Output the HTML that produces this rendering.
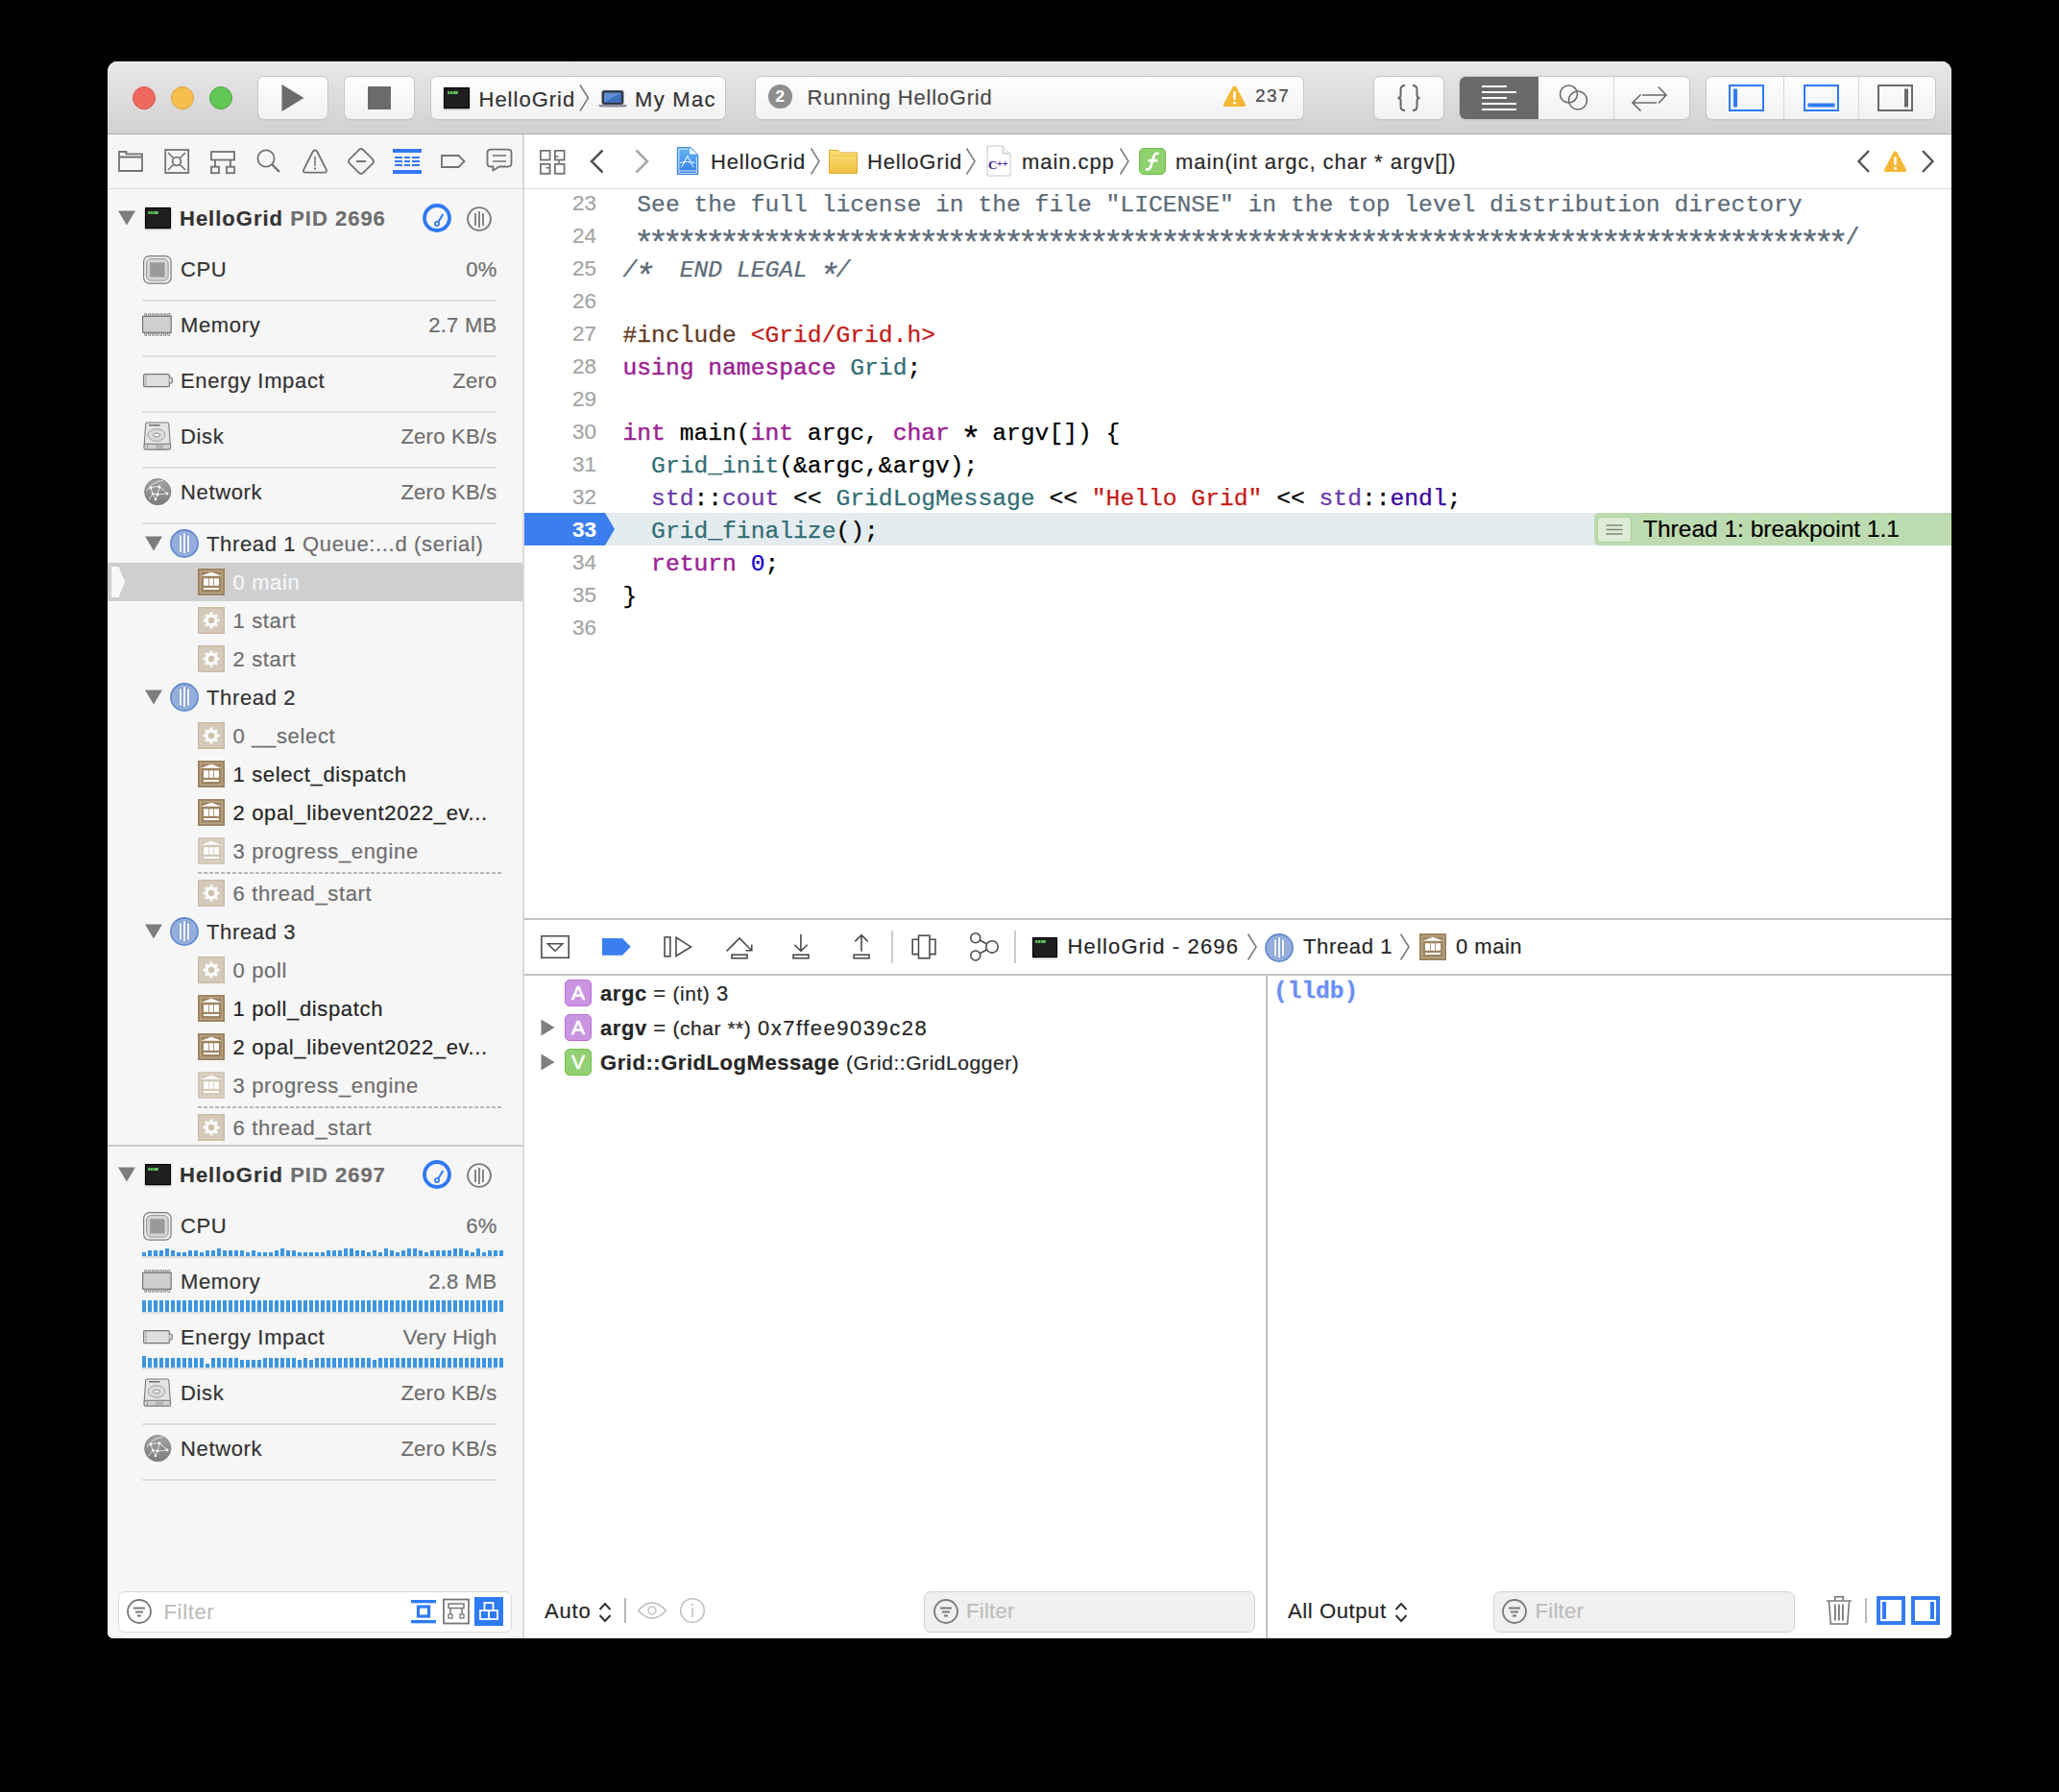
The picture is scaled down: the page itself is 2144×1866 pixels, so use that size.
<!DOCTYPE html>
<html><head><meta charset="utf-8">
<style>
*{box-sizing:border-box}
html,body{margin:0;padding:0}
body{background:#000;width:2144px;height:1866px;overflow:hidden;position:relative;font-family:"Liberation Sans",sans-serif;-webkit-text-stroke:0.2px currentColor}
.a{position:absolute}
#win{position:absolute;left:112px;top:64px;width:1920px;height:1642px;border-radius:10px 10px 6px 6px;overflow:hidden;background:#fff}
#tb{position:absolute;left:0;top:0;width:1920px;height:76px;background:linear-gradient(#e9e7e9,#d2d0d2);border-bottom:1px solid #acacac;box-shadow:inset 0 1px 0 #f3f3f3}
.light{position:absolute;top:26px;width:24px;height:24px;border-radius:50%}
.btn{position:absolute;top:15px;height:45.5px;border-radius:7px;background:linear-gradient(#fefefe,#f1f1f1);border:1px solid #c6c6c6;box-shadow:0 1px 0 rgba(0,0,0,0.04)}
#nav{position:absolute;left:0;top:76px;width:1920px;height:57px;background:#fff;border-bottom:1px solid #dcdcdc}
#navl{position:absolute;left:0;top:0;width:432px;height:56px;background:#f6f6f6}
#side{position:absolute;left:0;top:133px;width:434px;height:1509px;background:#f6f6f6;border-right:2px solid #dadada}
#ed{position:absolute;left:434px;top:133px;width:1486px;height:760px;background:#fff;overflow:hidden}
.lnum{font-family:"Liberation Sans",sans-serif;font-size:22.5px;line-height:34px;height:34px;text-align:right}
.ast{font-size:35.8px;letter-spacing:-6.68px;position:relative;top:11.4px;line-height:0;margin-left:-3.34px;margin-right:3.34px}
.mono{font-family:"Liberation Mono",monospace;font-size:24.66px;line-height:34px;height:34px;white-space:pre;-webkit-text-stroke:0.25px currentColor}
.ln{position:absolute;left:0;width:1487px;height:34px;font-family:"Liberation Mono",monospace;font-size:24.6px;line-height:34px;white-space:pre}
.num{position:absolute;left:0;width:75.5px;text-align:right;color:#a0a0a0;top:2px}
.code{position:absolute;left:103.75px;top:2px;color:#000}
#dbg{position:absolute;left:434px;top:892px;width:1486px;height:60px;background:#fff;border-top:2px solid #c2c2c2;border-bottom:2px solid #c2c2c2}
#vars{position:absolute;left:434px;top:952px;width:1486px;height:689px;background:#fff}

.tt{font-size:22px;color:#333;white-space:nowrap;line-height:28px}
.term{background:#1f1f1f;border:1px solid #000;box-shadow:0 1px 1.5px rgba(0,0,0,0.35)}
.term::after{content:"";position:absolute;left:2.5px;top:2.5px;width:11px;height:3px;border-radius:1px;background:repeating-linear-gradient(90deg,#5cbf5c 0 2.2px,#3a6a3a 2.2px 2.8px)}
.st{font-family:"Liberation Sans",sans-serif;font-size:23px;color:#262626;white-space:nowrap}
</style></head>
<body>
<div id="win">
  <div id="tb">
    <div class="light" style="left:26px;background:#ee6a5f;border:1px solid #d9534a"></div>
    <div class="light" style="left:66px;background:#f5be4f;border:1px solid #dea236"></div>
    <div class="light" style="left:106px;background:#62c655;border:1px solid #4fa93f"></div>
    <div class="btn" style="left:155.5px;width:74.5px"></div>
    <svg class="a" style="left:181px;top:24px" width="24" height="28"><path d="M0.5 0 L23.5 14 L0.5 28 Z" fill="#6b6b6b"/></svg>
    <div class="btn" style="left:245.5px;width:74.5px"></div>
    <div class="a" style="left:271px;top:26px;width:24px;height:24px;background:#6b6b6b"></div>
    <div class="btn" style="left:335.5px;width:308.5px"></div>
    <div class="a term" style="left:350px;top:27px;width:27px;height:22px"></div>
    <div class="a tt" style="left:386.5px;top:25.5px;letter-spacing:1.0px">HelloGrid</div>
    <svg class="a" style="left:491px;top:24px" width="11" height="28"><path d="M1 0.5 L9.5 14 L1 27.5" fill="none" stroke="#7a7a7a" stroke-width="1.6"/></svg>
    <svg class="a" style="left:511px;top:30px" width="30" height="18">
      <rect x="4" y="0.5" width="22" height="14" rx="1.5" fill="#2b3340" stroke="#4b4f57" stroke-width="1"/>
      <rect x="6" y="2.5" width="18" height="10" fill="#5f8fd6"/>
      <path d="M6 12.5 L24 2.5 L24 12.5 Z" fill="#3f6fc0"/>
      <path d="M0 15 L30 15 L28.5 17.5 L1.5 17.5 Z" fill="#8d9096"/>
    </svg>
    <div class="a tt" style="left:549px;top:25.5px;letter-spacing:1.3px">My Mac</div>
    <div class="btn" style="left:673.5px;width:572.5px"></div>
    <div class="a" style="left:688px;top:24px;width:24.5px;height:24.5px;border-radius:50%;background:#8e8e8e;color:#fff;font-size:17px;font-weight:bold;text-align:center;line-height:25px">2</div>
    <div class="a tt" style="left:728.5px;top:23.5px;color:#4a4a4a;letter-spacing:0.78px">Running HelloGrid</div>
    <svg class="a" style="left:1161px;top:24px" width="25" height="24"><path d="M12.5 1.5 Q13.7 1.5 14.5 2.8 L24 20.5 Q24.6 23 22 23 L3 23 Q0.4 23 1 20.5 L10.5 2.8 Q11.3 1.5 12.5 1.5Z" fill="#f5b733"/><rect x="11.2" y="7" width="2.6" height="9" rx="1.2" fill="#fff"/><circle cx="12.5" cy="19.3" r="1.5" fill="#fff"/></svg>
    <div class="a" style="left:1195px;top:25px;font-size:19px;color:#4a4a4a;letter-spacing:1.5px">237</div>
    <div class="btn" style="left:1317.5px;width:74.5px"></div>
    <svg class="a" style="left:1338px;top:22px" width="34" height="32"><path d="M13 3 Q8.5 3 8.5 7.5 L8.5 13.2 Q8.5 15.9 5.5 15.9 Q8.5 15.9 8.5 18.6 L8.5 24.5 Q8.5 29 13 29 M21 3 Q25.5 3 25.5 7.5 L25.5 13.2 Q25.5 15.9 28.5 15.9 Q25.5 15.9 25.5 18.6 L25.5 24.5 Q25.5 29 21 29" fill="none" stroke="#666" stroke-width="2"/></svg>
    <div class="btn" style="left:1407px;width:241px;overflow:hidden">
      <div class="a" style="left:-1px;top:-1px;width:83px;height:45px;background:#6a6a6a"></div>
      <div class="a" style="left:160px;top:0;width:1px;height:45px;background:#d6d6d6"></div>
    </div>
    <svg class="a" style="left:1431px;top:25px" width="37" height="27"><g fill="#fff"><rect x="0" y="0" width="26" height="2"/><rect x="0" y="6" width="36" height="2"/><rect x="0" y="12" width="26" height="2"/><rect x="0" y="18" width="36" height="2"/><rect x="0" y="24" width="36" height="2"/></g></svg>
    <svg class="a" style="left:1511px;top:23px" width="34" height="30"><circle cx="10.5" cy="11" r="9" fill="none" stroke="#6b6b6b" stroke-width="1.6"/><circle cx="20" cy="17.5" r="9.5" fill="none" stroke="#6b6b6b" stroke-width="1.6"/></svg>
    <svg class="a" style="left:1587px;top:24px" width="38" height="28"><g fill="none" stroke="#6b6b6b" stroke-width="1.6"><path d="M11 11 L36 11 M28 2.5 L36 11 L28 19.5"/><path d="M1 19 L26 19 M9.5 10.5 L1 19 L9.5 27.5"/></g></svg>
    <div class="btn" style="left:1664px;width:240px;overflow:hidden">
      <div class="a" style="left:80px;top:0;width:1px;height:45px;background:#d6d6d6"></div>
      <div class="a" style="left:158px;top:0;width:1px;height:45px;background:#d6d6d6"></div>
    </div>
    <svg class="a" style="left:1688px;top:24px" width="37" height="28"><rect x="1" y="1" width="35" height="26" fill="none" stroke="#2f7bf5" stroke-width="2"/><rect x="5" y="4.5" width="4" height="19" fill="#2f7bf5"/></svg>
    <svg class="a" style="left:1766px;top:24px" width="37" height="28"><rect x="1" y="1" width="35" height="26" fill="none" stroke="#2f7bf5" stroke-width="2"/><rect x="4.5" y="19.5" width="28" height="4" fill="#2f7bf5"/></svg>
    <svg class="a" style="left:1843px;top:24px" width="37" height="28"><rect x="1" y="1" width="35" height="26" fill="none" stroke="#6b6b6b" stroke-width="2"/><rect x="28" y="4.5" width="4" height="19" fill="#6b6b6b"/></svg>
  </div>
  <div id="nav"><div id="navl"></div>
    <svg class="a" style="left:0;top:0" width="432" height="56"><g fill="none" stroke="#737373" stroke-width="1.8">
      <path d="M12 18 L19.5 18 L19.5 20.30000000000001 L36 20.30000000000001 L36 38 L12 38 Z M12 23.5 L36 23.5"/>
      <rect x="60.19999999999999" y="16" width="24" height="24"/>
      <circle cx="72" cy="28" r="4.3"/>
      <path d="M63 19 L68.5 24.5 M81 19 L75.5 24.5 M63 37 L68.5 31.5 M81 37 L75.5 31.5" stroke-width="1.6"/>
      <rect x="108" y="18" width="24" height="8.5"/>
      <rect x="108" y="33.69999999999999" width="8" height="6.5"/>
      <rect x="124" y="33.69999999999999" width="8" height="6.5"/>
      <path d="M112 26.5 L112 33.69999999999999 M128 26.5 L128 33.69999999999999"/>
      <circle cx="165" cy="25" r="8.6"/>
      <path d="M171 31 L179 39" stroke-width="2.4"/>
      <path d="M216 16.5 Q217.5 16.5 218.3 18 L228 37 Q228.60000000000002 39.69999999999999 225.8 39.69999999999999 L206.2 39.69999999999999 Q203.39999999999998 39.69999999999999 204 37 L213.7 18 Q214.5 16.5 216 16.5 Z"/>
      <path d="M216 23 L216 33" stroke-width="1.5"/>
      <rect x="254" y="18" width="20" height="20" rx="3.2" transform="rotate(45 264 28)"/>
      <path d="M259 28 L269 28"/>
      <path d="M348 22 L365.5 22 L371.5 28 L365.5 34 L348 34 Z"/>
      <path d="M399 15.699999999999989 L417 15.699999999999989 Q420.5 15.699999999999989 420.5 19 L420.5 30 Q420.5 33.5 417 33.5 L408 33.5 L401.5 37.5 L401.5 33.5 L399 33.5 Q395.5 33.5 395.5 30 L395.5 19 Q395.5 15.699999999999989 399 15.699999999999989 Z"/>
      <path d="M401 22 L415 22 M401 28 L415 28" stroke-width="1.6"/>
    </g>
    <rect x="215" y="34.5" width="2" height="2" fill="#737373"/>
    <g fill="#3478f6">
      <rect x="297" y="15" width="30" height="4"/>
      <rect x="297" y="37" width="30" height="4"/>
      <rect x="299" y="23" width="8" height="2"/><rect x="309" y="23" width="6" height="2"/><rect x="317" y="23" width="8" height="2"/>
      <rect x="299" y="27" width="8" height="2"/><rect x="309" y="27" width="6" height="2"/><rect x="317" y="27" width="8" height="2"/>
      <rect x="299" y="31" width="8" height="2"/><rect x="309" y="31" width="6" height="2"/><rect x="317" y="31" width="8" height="2"/>
    </g></svg>
    <div class="a" style="left:432px;top:0;width:1.5px;height:56px;background:#d8d8d8"></div>
    <svg class="a" style="left:448px;top:14px" width="30" height="30"><g fill="none" stroke="#737373" stroke-width="1.8">
      <rect x="2.9" y="2.9" width="9.7" height="9.6"/><rect x="17.9" y="2.9" width="9.7" height="9.6"/><rect x="2.9" y="16.9" width="9.7" height="9.9"/><rect x="17.9" y="16.9" width="9.7" height="9.9"/><path d="M17.9 9 L21.5 9 M22 12.5 L22 16.9 M12.6 20.7 L8.5 20.7" stroke-width="1.6"/></g></svg>
    <svg class="a" style="left:501px;top:14px" width="18" height="28"><path d="M14.5 2.5 L3 14 L14.5 25.5" fill="none" stroke="#555" stroke-width="2.5"/></svg>
    <svg class="a" style="left:547px;top:14px" width="18" height="28"><path d="M3.5 2.5 L15 14 L3.5 25.5" fill="none" stroke="#a8a8a8" stroke-width="2.5"/></svg>
    <svg class="a" style="left:592px;top:12px" width="25" height="31">
      <defs><linearGradient id="gapp" x1="0" y1="0" x2="0" y2="1"><stop offset="0" stop-color="#6ab6f0"/><stop offset="1" stop-color="#2f7cef"/></linearGradient></defs>
      <path d="M1.3 1.5 L13.8 1.5 Q15 1.5 16 2.4 L21.8 8 Q22.8 9 22.8 10.5 L22.8 29.6 L1.3 29.6 Z" fill="url(#gapp)" stroke="#3a86d8" stroke-width="1"/>
      <path d="M14.2 2 L14.2 8.6 L22.3 8.6 Z" fill="#f4f8fc"/>
      <path d="M2.9 28.3 L2.9 3.1 L12.7 3.1 M21.4 11.2 L21.4 28.3 L2.9 28.3 M2.9 25.9 L21.4 25.9" stroke="#e2efff" stroke-width="0.9" fill="none"/>
      <path d="M11.9 10.6 L5.5 22.4 M11.9 10.6 L18.4 22.4 M4.3 17.6 Q12 15.6 19.6 17.6" stroke="#f0f6ff" stroke-width="1.3" fill="none" stroke-dasharray="2 0.6"/>
    </svg>
    <div class="a tt" style="left:628px;top:14.5px;color:#2a2a2a;letter-spacing:0.83px">HelloGrid</div>
    <svg class="a" style="left:731px;top:14px" width="12" height="28"><path d="M1.5 0.5 L10 14 L1.5 27.5" fill="none" stroke="#808080" stroke-width="1.6"/></svg>
    <svg class="a" style="left:750px;top:15px" width="32" height="27">
      <defs><linearGradient id="gfold" x1="0" y1="0" x2="0" y2="1"><stop offset="0" stop-color="#fbe07a"/><stop offset="1" stop-color="#f0c040"/></linearGradient></defs>
      <path d="M1.5 1.5 L11 1.5 L12.5 4 L30.5 4 L30.5 25.5 L1.5 25.5 Z" fill="url(#gfold)" stroke="#dcae36" stroke-width="1"/>
      <path d="M1.5 7 L30.5 7" stroke="#e9c24c" stroke-width="1"/>
    </svg>
    <div class="a tt" style="left:791px;top:14.5px;color:#2a2a2a;letter-spacing:0.83px">HelloGrid</div>
    <svg class="a" style="left:893px;top:14px" width="12" height="28"><path d="M1.5 0.5 L10 14 L1.5 27.5" fill="none" stroke="#808080" stroke-width="1.6"/></svg>
    <svg class="a" style="left:915px;top:11px" width="26" height="33">
      <path d="M1 1 L17 1 L25 9 L25 32 L1 32 Z" fill="#fff" stroke="#c8c8c8" stroke-width="1"/>
      <path d="M17 1 L17 9 L25 9" fill="#eee" stroke="#c8c8c8" stroke-width="1"/>
      <text x="2" y="25" font-family="Liberation Serif" font-size="13" fill="#3d1d92" font-weight="bold">C</text>
      <text x="11" y="23" font-family="Liberation Sans" font-size="10" fill="#3d1d92">++</text>
    </svg>
    <div class="a tt" style="left:952px;top:14.5px;color:#2a2a2a;letter-spacing:0.93px">main.cpp</div>
    <svg class="a" style="left:1053px;top:14px" width="12" height="28"><path d="M1.5 0.5 L10 14 L1.5 27.5" fill="none" stroke="#808080" stroke-width="1.6"/></svg>
    <div class="a" style="left:1074px;top:14px;width:28px;height:28px;border-radius:5px;background:#8fd16f;border:1.5px solid #6cbd4c"></div>
    <svg class="a" style="left:1074px;top:14px" width="28" height="28"><path d="M20.5 6.2 Q17 4.5 15.5 8.5 L12.2 19.5 Q10.8 23.5 7 22 M9.5 13.2 L19.5 13.2" fill="none" stroke="#fff" stroke-width="2.7"/></svg>
    <div class="a tt" style="left:1112px;top:14.5px;color:#2a2a2a;letter-spacing:0.94px">main(int argc, char * argv[])</div>
    <svg class="a" style="left:1820px;top:15px" width="17" height="26"><path d="M14 2 L3.5 13 L14 24" fill="none" stroke="#555" stroke-width="2.4"/></svg>
    <svg class="a" style="left:1849px;top:16px" width="25" height="24"><path d="M12.5 1.5 Q13.7 1.5 14.5 2.8 L24 20.5 Q24.6 23 22 23 L3 23 Q0.4 23 1 20.5 L10.5 2.8 Q11.3 1.5 12.5 1.5Z" fill="#f5b733"/><rect x="11.2" y="7" width="2.6" height="9" rx="1.2" fill="#fff"/><circle cx="12.5" cy="19.3" r="1.5" fill="#fff"/></svg>
    <svg class="a" style="left:1887px;top:15px" width="17" height="26"><path d="M3 2 L13.5 13 L3 24" fill="none" stroke="#555" stroke-width="2.4"/></svg>
  </div>
  <div id="side"><svg class="a" style="left:11px;top:22px" width="18" height="16"><path d="M0 0.5 L18 0.5 L9 15.5 Z" fill="#7d7d7d"/></svg>
<div class="a term" style="left:38.5px;top:19px;width:27px;height:22px"></div>
<div class="a" style="left:75px;top:15.8px;height:30px;line-height:30px;font-size:22px;font-weight:bold;color:#333333;white-space:nowrap;letter-spacing:0.65px;letter-spacing:1.0px">HelloGrid <span style="color:#6e6e6e">PID 2696</span></div>
<svg class="a" style="left:327px;top:14px" width="32" height="32"><circle cx="16" cy="16" r="13" fill="none" stroke="#3079f4" stroke-width="3.8"/><circle cx="16" cy="22" r="2.1" fill="none" stroke="#3079f4" stroke-width="1.7"/><path d="M17.3 20.3 L22.3 12" stroke="#3079f4" stroke-width="2" fill="none"/></svg>
<svg class="a" style="left:373px;top:17px" width="28" height="28"><circle cx="14" cy="14" r="11.9" fill="none" stroke="#7a7a7a" stroke-width="1.9"/><path d="M10 8 L10 21 M14 6 L14 23 M18 8 L18 21" stroke="#7a7a7a" stroke-width="1.8"/></svg>
<svg class="a" style="left:37px;top:68.5px" width="30" height="30"><rect x="0.6" y="0.6" width="28.5" height="28.5" rx="6" fill="#efefef" stroke="#7a7a7a" stroke-width="1.2"/><rect x="3.6" y="3.6" width="22.5" height="22.5" rx="4.5" fill="#d6d6d6" stroke="#929292" stroke-width="1"/><rect x="7.5" y="7.5" width="14.7" height="14.7" fill="#9c9c9c" stroke="#9c9c9c" stroke-width="1.2" stroke-dasharray="1.2 1"/><rect x="8.8" y="8.8" width="12.1" height="12.1" fill="#9a9a9a"/></svg>
<div class="a" style="left:76px;top:68.8px;height:30px;line-height:30px;font-size:22px;font-weight:normal;color:#333333;white-space:nowrap;letter-spacing:0.65px;">CPU</div>
<div class="a" style="right:26.799999999999955px;top:68.8px;height:30px;line-height:30px;font-size:22px;color:#6e6e6e;white-space:nowrap;text-align:right;letter-spacing:0.25px;margin-right:-0.25px">0%</div>
<div class="a" style="left:36px;top:115px;width:368px;height:2px;background:#dedede"></div>
<svg class="a" style="left:36px;top:129px" width="31" height="24"><rect x="2.6" y="0.3" width="2.2" height="3.4" rx="0.8" fill="#ddd" stroke="#7a7a7a" stroke-width="0.9"/><rect x="2.6" y="20.2" width="2.2" height="3.4" rx="0.8" fill="#ddd" stroke="#7a7a7a" stroke-width="0.9"/><rect x="6.6" y="0.3" width="2.2" height="3.4" rx="0.8" fill="#ddd" stroke="#7a7a7a" stroke-width="0.9"/><rect x="6.6" y="20.2" width="2.2" height="3.4" rx="0.8" fill="#ddd" stroke="#7a7a7a" stroke-width="0.9"/><rect x="10.6" y="0.3" width="2.2" height="3.4" rx="0.8" fill="#ddd" stroke="#7a7a7a" stroke-width="0.9"/><rect x="10.6" y="20.2" width="2.2" height="3.4" rx="0.8" fill="#ddd" stroke="#7a7a7a" stroke-width="0.9"/><rect x="14.6" y="0.3" width="2.2" height="3.4" rx="0.8" fill="#ddd" stroke="#7a7a7a" stroke-width="0.9"/><rect x="14.6" y="20.2" width="2.2" height="3.4" rx="0.8" fill="#ddd" stroke="#7a7a7a" stroke-width="0.9"/><rect x="18.6" y="0.3" width="2.2" height="3.4" rx="0.8" fill="#ddd" stroke="#7a7a7a" stroke-width="0.9"/><rect x="18.6" y="20.2" width="2.2" height="3.4" rx="0.8" fill="#ddd" stroke="#7a7a7a" stroke-width="0.9"/><rect x="22.6" y="0.3" width="2.2" height="3.4" rx="0.8" fill="#ddd" stroke="#7a7a7a" stroke-width="0.9"/><rect x="22.6" y="20.2" width="2.2" height="3.4" rx="0.8" fill="#ddd" stroke="#7a7a7a" stroke-width="0.9"/><rect x="26.6" y="0.3" width="2.2" height="3.4" rx="0.8" fill="#ddd" stroke="#7a7a7a" stroke-width="0.9"/><rect x="26.6" y="20.2" width="2.2" height="3.4" rx="0.8" fill="#ddd" stroke="#7a7a7a" stroke-width="0.9"/><rect x="0.6" y="3.3" width="29.6" height="17" fill="#cfcfcf" stroke="#777" stroke-width="1.2"/></svg>
<div class="a" style="left:76px;top:126.8px;height:30px;line-height:30px;font-size:22px;font-weight:normal;color:#333333;white-space:nowrap;letter-spacing:0.65px;">Memory</div>
<div class="a" style="right:26.799999999999955px;top:126.8px;height:30px;line-height:30px;font-size:22px;color:#6e6e6e;white-space:nowrap;text-align:right;letter-spacing:0.25px;margin-right:-0.25px">2.7 MB</div>
<div class="a" style="left:36px;top:173px;width:368px;height:2px;background:#dedede"></div>
<svg class="a" style="left:37px;top:191.5px" width="31" height="16"><rect x="0.6" y="0.6" width="26.8" height="13" rx="1.3" fill="#dedede" stroke="#777" stroke-width="1.2"/><path d="M27.4 4.3 L29.2 4.3 Q30.3 4.3 30.3 5.7 L30.3 8.5 Q30.3 9.9 29.2 9.9 L27.4 9.9" fill="#dedede" stroke="#777" stroke-width="1.1"/><path d="M3 1.4 L3 12.8" stroke="#999" stroke-width="0.8"/></svg>
<div class="a" style="left:76px;top:184.8px;height:30px;line-height:30px;font-size:22px;font-weight:normal;color:#333333;white-space:nowrap;letter-spacing:0.65px;">Energy Impact</div>
<div class="a" style="right:26.799999999999955px;top:184.8px;height:30px;line-height:30px;font-size:22px;color:#6e6e6e;white-space:nowrap;text-align:right;letter-spacing:0.25px;margin-right:-0.25px">Zero</div>
<div class="a" style="left:36px;top:231px;width:368px;height:2px;background:#dedede"></div>
<svg class="a" style="left:37px;top:242px" width="30" height="31"><path d="M3.5 1 L25 1 Q26.5 1 26.8 2.5 L28.3 24 L1.2 24 L2.7 2.5 Q3 1 3.5 1 Z" fill="#e4e4e4" stroke="#7a7a7a" stroke-width="1.1"/><rect x="1" y="23.3" width="27.6" height="5.8" rx="1.5" fill="#d0d0d0" stroke="#7a7a7a" stroke-width="1.1"/><rect x="6" y="3" width="11.5" height="1.6" fill="#777"/><ellipse cx="14" cy="14" rx="9" ry="6.3" fill="#dadada" stroke="#999" stroke-width="0.9"/><ellipse cx="14" cy="14" rx="3.5" ry="2" fill="#eee" stroke="#888" stroke-width="0.9"/><path d="M4.5 24.3 L4.5 28.3 M14 24.3 L14 28.3 M16 24.3 L16 28.3 M18 24.3 L18 28.3 M20 24.3 L20 28.3" stroke="#888" stroke-width="0.8"/></svg>
<div class="a" style="left:76px;top:242.8px;height:30px;line-height:30px;font-size:22px;font-weight:normal;color:#333333;white-space:nowrap;letter-spacing:0.65px;">Disk</div>
<div class="a" style="right:26.799999999999955px;top:242.8px;height:30px;line-height:30px;font-size:22px;color:#6e6e6e;white-space:nowrap;text-align:right;letter-spacing:0.25px;margin-right:-0.25px">Zero KB/s</div>
<div class="a" style="left:36px;top:289px;width:368px;height:2px;background:#dedede"></div>
<svg class="a" style="left:38px;top:301px" width="29" height="29"><defs><linearGradient id="gnet" x1="0" y1="0" x2="0" y2="1"><stop offset="0" stop-color="#a5a5a5"/><stop offset="1" stop-color="#7b7b7b"/></linearGradient></defs><circle cx="14.2" cy="14.2" r="13.6" fill="url(#gnet)" stroke="#777" stroke-width="0.8"/><g stroke="#f2f2f2" stroke-width="0.8" fill="none"><path d="M7 10 Q12 8 16 9 Q21 12 24 16 M9 16 L14 17 L24 16 M7 10 L9 16 L12 22 M16 9 L14 17 L12 22 M3 13 Q8 4 20 2 M5 22 Q9 14 14 17"/></g><g fill="#fff"><circle cx="7" cy="10" r="1.4"/><circle cx="16" cy="9" r="1.4"/><circle cx="9" cy="16" r="1.2"/><circle cx="14" cy="17" r="1.4"/><circle cx="24" cy="16" r="1.4"/><circle cx="12" cy="22" r="1.2"/></g></svg>
<div class="a" style="left:76px;top:300.8px;height:30px;line-height:30px;font-size:22px;font-weight:normal;color:#333333;white-space:nowrap;letter-spacing:0.65px;">Network</div>
<div class="a" style="right:26.799999999999955px;top:300.8px;height:30px;line-height:30px;font-size:22px;color:#6e6e6e;white-space:nowrap;text-align:right;letter-spacing:0.25px;margin-right:-0.25px">Zero KB/s</div>
<div class="a" style="left:36px;top:347px;width:368px;height:2px;background:#dedede"></div>
<div class="a" style="left:0px;top:389px;width:432px;height:40px;background:#cfcfcf"></div>
<svg class="a" style="left:3px;top:393px" width="16" height="33"><path d="M1 0 L8.5 0 L15 16 L8.5 32 L1 32 Z" fill="#f8f8f8"/></svg>
<svg class="a" style="left:39px;top:361px" width="18" height="16"><path d="M0 0.5 L18 0.5 L9 15.5 Z" fill="#7d7d7d"/></svg>
<svg class="a" style="left:64px;top:353px" width="32" height="32"><circle cx="16" cy="16" r="14.1" fill="#95aedb" stroke="#5d87cb" stroke-width="1.6"/><g fill="#fff" stroke="#6b8fcf" stroke-width="0.6"><rect x="10.8" y="7" width="2.4" height="18"/><rect x="14.8" y="4.8" width="2.4" height="22"/><rect x="18.8" y="7" width="2.4" height="18"/></g></svg>
<div class="a" style="left:103px;top:354.8px;height:30px;line-height:30px;font-size:22px;font-weight:normal;color:#333333;white-space:nowrap;letter-spacing:0.65px;">Thread 1 <span style="color:#6e6e6e">Queue:...d (serial)</span></div>
<svg class="a" style="left:94px;top:395px" width="28" height="28"><rect x="0" y="0" width="28" height="28" fill="#9e8461"/><rect x="2" y="2" width="24" height="24" fill="#b9a586"/><rect x="3.5" y="3.5" width="21" height="21" fill="#9e8461"/><path d="M3.2 7.8 L14 3.8 L24.8 7.8 Z" fill="#fff"/><rect x="6" y="10.3" width="5" height="7.5" fill="#fff"/><rect x="11.8" y="10.3" width="4.4" height="7.5" fill="#fff"/><rect x="17" y="10.3" width="5" height="7.5" fill="#fff"/><rect x="6" y="20" width="16" height="2" fill="#fff"/></svg>
<div class="a" style="left:130.5px;top:394.8px;height:30px;line-height:30px;font-size:22px;font-weight:normal;color:#f4f8fc;white-space:nowrap;letter-spacing:0.65px;">0 main</div>
<svg class="a" style="left:94px;top:435px" width="28" height="28"><rect x="0" y="0" width="28" height="28" fill="#c9bba6"/><rect x="1.5" y="1.5" width="25" height="25" fill="#d5cab9"/><polygon points="12.55,5.52 15.45,5.52 15.46,7.56 17.52,8.42 18.96,6.98 21.02,9.04 19.58,10.48 20.44,12.54 22.48,12.55 22.48,15.45 20.44,15.46 19.58,17.52 21.02,18.96 18.96,21.02 17.52,19.58 15.46,20.44 15.45,22.48 12.55,22.48 12.54,20.44 10.48,19.58 9.04,21.02 6.98,18.96 8.42,17.52 7.56,15.46 5.52,15.45 5.52,12.55 7.56,12.54 8.42,10.48 6.98,9.04 9.04,6.98 10.48,8.42 12.54,7.56" fill="#fafafa"/><circle cx="14" cy="14" r="3.2" fill="#cdbfab"/></svg>
<div class="a" style="left:130.5px;top:434.8px;height:30px;line-height:30px;font-size:22px;font-weight:normal;color:#6e6e6e;white-space:nowrap;letter-spacing:0.65px;">1 start</div>
<svg class="a" style="left:94px;top:475px" width="28" height="28"><rect x="0" y="0" width="28" height="28" fill="#c9bba6"/><rect x="1.5" y="1.5" width="25" height="25" fill="#d5cab9"/><polygon points="12.55,5.52 15.45,5.52 15.46,7.56 17.52,8.42 18.96,6.98 21.02,9.04 19.58,10.48 20.44,12.54 22.48,12.55 22.48,15.45 20.44,15.46 19.58,17.52 21.02,18.96 18.96,21.02 17.52,19.58 15.46,20.44 15.45,22.48 12.55,22.48 12.54,20.44 10.48,19.58 9.04,21.02 6.98,18.96 8.42,17.52 7.56,15.46 5.52,15.45 5.52,12.55 7.56,12.54 8.42,10.48 6.98,9.04 9.04,6.98 10.48,8.42 12.54,7.56" fill="#fafafa"/><circle cx="14" cy="14" r="3.2" fill="#cdbfab"/></svg>
<div class="a" style="left:130.5px;top:474.8px;height:30px;line-height:30px;font-size:22px;font-weight:normal;color:#6e6e6e;white-space:nowrap;letter-spacing:0.65px;">2 start</div>
<svg class="a" style="left:39px;top:521px" width="18" height="16"><path d="M0 0.5 L18 0.5 L9 15.5 Z" fill="#7d7d7d"/></svg>
<svg class="a" style="left:64px;top:513px" width="32" height="32"><circle cx="16" cy="16" r="14.1" fill="#95aedb" stroke="#5d87cb" stroke-width="1.6"/><g fill="#fff" stroke="#6b8fcf" stroke-width="0.6"><rect x="10.8" y="7" width="2.4" height="18"/><rect x="14.8" y="4.8" width="2.4" height="22"/><rect x="18.8" y="7" width="2.4" height="18"/></g></svg>
<div class="a" style="left:103px;top:514.8px;height:30px;line-height:30px;font-size:22px;font-weight:normal;color:#333333;white-space:nowrap;letter-spacing:0.65px;">Thread 2</div>
<svg class="a" style="left:94px;top:555px" width="28" height="28"><rect x="0" y="0" width="28" height="28" fill="#c9bba6"/><rect x="1.5" y="1.5" width="25" height="25" fill="#d5cab9"/><polygon points="12.55,5.52 15.45,5.52 15.46,7.56 17.52,8.42 18.96,6.98 21.02,9.04 19.58,10.48 20.44,12.54 22.48,12.55 22.48,15.45 20.44,15.46 19.58,17.52 21.02,18.96 18.96,21.02 17.52,19.58 15.46,20.44 15.45,22.48 12.55,22.48 12.54,20.44 10.48,19.58 9.04,21.02 6.98,18.96 8.42,17.52 7.56,15.46 5.52,15.45 5.52,12.55 7.56,12.54 8.42,10.48 6.98,9.04 9.04,6.98 10.48,8.42 12.54,7.56" fill="#fafafa"/><circle cx="14" cy="14" r="3.2" fill="#cdbfab"/></svg>
<div class="a" style="left:130.5px;top:554.8px;height:30px;line-height:30px;font-size:22px;font-weight:normal;color:#6e6e6e;white-space:nowrap;letter-spacing:0.65px;">0 __select</div>
<svg class="a" style="left:94px;top:595px" width="28" height="28"><rect x="0" y="0" width="28" height="28" fill="#9e8461"/><rect x="2" y="2" width="24" height="24" fill="#b9a586"/><rect x="3.5" y="3.5" width="21" height="21" fill="#9e8461"/><path d="M3.2 7.8 L14 3.8 L24.8 7.8 Z" fill="#fff"/><rect x="6" y="10.3" width="5" height="7.5" fill="#fff"/><rect x="11.8" y="10.3" width="4.4" height="7.5" fill="#fff"/><rect x="17" y="10.3" width="5" height="7.5" fill="#fff"/><rect x="6" y="20" width="16" height="2" fill="#fff"/></svg>
<div class="a" style="left:130.5px;top:594.8px;height:30px;line-height:30px;font-size:22px;font-weight:normal;color:#262626;white-space:nowrap;letter-spacing:0.65px;">1 select_dispatch</div>
<svg class="a" style="left:94px;top:635px" width="28" height="28"><rect x="0" y="0" width="28" height="28" fill="#9e8461"/><rect x="2" y="2" width="24" height="24" fill="#b9a586"/><rect x="3.5" y="3.5" width="21" height="21" fill="#9e8461"/><path d="M3.2 7.8 L14 3.8 L24.8 7.8 Z" fill="#fff"/><rect x="6" y="10.3" width="5" height="7.5" fill="#fff"/><rect x="11.8" y="10.3" width="4.4" height="7.5" fill="#fff"/><rect x="17" y="10.3" width="5" height="7.5" fill="#fff"/><rect x="6" y="20" width="16" height="2" fill="#fff"/></svg>
<div class="a" style="left:130.5px;top:634.8px;height:30px;line-height:30px;font-size:22px;font-weight:normal;color:#262626;white-space:nowrap;letter-spacing:0.65px;">2 opal_libevent2022_ev...</div>
<svg class="a" style="left:94px;top:675px" width="28" height="28"><rect x="0" y="0" width="28" height="28" fill="#d3c8b7"/><rect x="2" y="2" width="24" height="24" fill="#ddd3c5"/><rect x="3.5" y="3.5" width="21" height="21" fill="#d3c8b7"/><path d="M3.2 7.8 L14 3.8 L24.8 7.8 Z" fill="#fff"/><rect x="6" y="10.3" width="5" height="7.5" fill="#fff"/><rect x="11.8" y="10.3" width="4.4" height="7.5" fill="#fff"/><rect x="17" y="10.3" width="5" height="7.5" fill="#fff"/><rect x="6" y="20" width="16" height="2" fill="#fff"/></svg>
<div class="a" style="left:130.5px;top:674.8px;height:30px;line-height:30px;font-size:22px;font-weight:normal;color:#6e6e6e;white-space:nowrap;letter-spacing:0.65px;">3 progress_engine</div>
<div class="a" style="left:94px;top:711px;width:316px;height:2px;background:repeating-linear-gradient(90deg,#b8b8b8 0 4px,transparent 4px 6px)"></div>
<svg class="a" style="left:94px;top:719px" width="28" height="28"><rect x="0" y="0" width="28" height="28" fill="#c9bba6"/><rect x="1.5" y="1.5" width="25" height="25" fill="#d5cab9"/><polygon points="12.55,5.52 15.45,5.52 15.46,7.56 17.52,8.42 18.96,6.98 21.02,9.04 19.58,10.48 20.44,12.54 22.48,12.55 22.48,15.45 20.44,15.46 19.58,17.52 21.02,18.96 18.96,21.02 17.52,19.58 15.46,20.44 15.45,22.48 12.55,22.48 12.54,20.44 10.48,19.58 9.04,21.02 6.98,18.96 8.42,17.52 7.56,15.46 5.52,15.45 5.52,12.55 7.56,12.54 8.42,10.48 6.98,9.04 9.04,6.98 10.48,8.42 12.54,7.56" fill="#fafafa"/><circle cx="14" cy="14" r="3.2" fill="#cdbfab"/></svg>
<div class="a" style="left:130.5px;top:718.8px;height:30px;line-height:30px;font-size:22px;font-weight:normal;color:#6e6e6e;white-space:nowrap;letter-spacing:0.65px;">6 thread_start</div>
<svg class="a" style="left:39px;top:765px" width="18" height="16"><path d="M0 0.5 L18 0.5 L9 15.5 Z" fill="#7d7d7d"/></svg>
<svg class="a" style="left:64px;top:757px" width="32" height="32"><circle cx="16" cy="16" r="14.1" fill="#95aedb" stroke="#5d87cb" stroke-width="1.6"/><g fill="#fff" stroke="#6b8fcf" stroke-width="0.6"><rect x="10.8" y="7" width="2.4" height="18"/><rect x="14.8" y="4.8" width="2.4" height="22"/><rect x="18.8" y="7" width="2.4" height="18"/></g></svg>
<div class="a" style="left:103px;top:758.8px;height:30px;line-height:30px;font-size:22px;font-weight:normal;color:#333333;white-space:nowrap;letter-spacing:0.65px;">Thread 3</div>
<svg class="a" style="left:94px;top:799px" width="28" height="28"><rect x="0" y="0" width="28" height="28" fill="#c9bba6"/><rect x="1.5" y="1.5" width="25" height="25" fill="#d5cab9"/><polygon points="12.55,5.52 15.45,5.52 15.46,7.56 17.52,8.42 18.96,6.98 21.02,9.04 19.58,10.48 20.44,12.54 22.48,12.55 22.48,15.45 20.44,15.46 19.58,17.52 21.02,18.96 18.96,21.02 17.52,19.58 15.46,20.44 15.45,22.48 12.55,22.48 12.54,20.44 10.48,19.58 9.04,21.02 6.98,18.96 8.42,17.52 7.56,15.46 5.52,15.45 5.52,12.55 7.56,12.54 8.42,10.48 6.98,9.04 9.04,6.98 10.48,8.42 12.54,7.56" fill="#fafafa"/><circle cx="14" cy="14" r="3.2" fill="#cdbfab"/></svg>
<div class="a" style="left:130.5px;top:798.8px;height:30px;line-height:30px;font-size:22px;font-weight:normal;color:#6e6e6e;white-space:nowrap;letter-spacing:0.65px;">0 poll</div>
<svg class="a" style="left:94px;top:839px" width="28" height="28"><rect x="0" y="0" width="28" height="28" fill="#9e8461"/><rect x="2" y="2" width="24" height="24" fill="#b9a586"/><rect x="3.5" y="3.5" width="21" height="21" fill="#9e8461"/><path d="M3.2 7.8 L14 3.8 L24.8 7.8 Z" fill="#fff"/><rect x="6" y="10.3" width="5" height="7.5" fill="#fff"/><rect x="11.8" y="10.3" width="4.4" height="7.5" fill="#fff"/><rect x="17" y="10.3" width="5" height="7.5" fill="#fff"/><rect x="6" y="20" width="16" height="2" fill="#fff"/></svg>
<div class="a" style="left:130.5px;top:838.8px;height:30px;line-height:30px;font-size:22px;font-weight:normal;color:#262626;white-space:nowrap;letter-spacing:0.65px;">1 poll_dispatch</div>
<svg class="a" style="left:94px;top:879px" width="28" height="28"><rect x="0" y="0" width="28" height="28" fill="#9e8461"/><rect x="2" y="2" width="24" height="24" fill="#b9a586"/><rect x="3.5" y="3.5" width="21" height="21" fill="#9e8461"/><path d="M3.2 7.8 L14 3.8 L24.8 7.8 Z" fill="#fff"/><rect x="6" y="10.3" width="5" height="7.5" fill="#fff"/><rect x="11.8" y="10.3" width="4.4" height="7.5" fill="#fff"/><rect x="17" y="10.3" width="5" height="7.5" fill="#fff"/><rect x="6" y="20" width="16" height="2" fill="#fff"/></svg>
<div class="a" style="left:130.5px;top:878.8px;height:30px;line-height:30px;font-size:22px;font-weight:normal;color:#262626;white-space:nowrap;letter-spacing:0.65px;">2 opal_libevent2022_ev...</div>
<svg class="a" style="left:94px;top:919px" width="28" height="28"><rect x="0" y="0" width="28" height="28" fill="#d3c8b7"/><rect x="2" y="2" width="24" height="24" fill="#ddd3c5"/><rect x="3.5" y="3.5" width="21" height="21" fill="#d3c8b7"/><path d="M3.2 7.8 L14 3.8 L24.8 7.8 Z" fill="#fff"/><rect x="6" y="10.3" width="5" height="7.5" fill="#fff"/><rect x="11.8" y="10.3" width="4.4" height="7.5" fill="#fff"/><rect x="17" y="10.3" width="5" height="7.5" fill="#fff"/><rect x="6" y="20" width="16" height="2" fill="#fff"/></svg>
<div class="a" style="left:130.5px;top:918.8px;height:30px;line-height:30px;font-size:22px;font-weight:normal;color:#6e6e6e;white-space:nowrap;letter-spacing:0.65px;">3 progress_engine</div>
<div class="a" style="left:94px;top:955px;width:316px;height:2px;background:repeating-linear-gradient(90deg,#b8b8b8 0 4px,transparent 4px 6px)"></div>
<svg class="a" style="left:94px;top:963px" width="28" height="28"><rect x="0" y="0" width="28" height="28" fill="#c9bba6"/><rect x="1.5" y="1.5" width="25" height="25" fill="#d5cab9"/><polygon points="12.55,5.52 15.45,5.52 15.46,7.56 17.52,8.42 18.96,6.98 21.02,9.04 19.58,10.48 20.44,12.54 22.48,12.55 22.48,15.45 20.44,15.46 19.58,17.52 21.02,18.96 18.96,21.02 17.52,19.58 15.46,20.44 15.45,22.48 12.55,22.48 12.54,20.44 10.48,19.58 9.04,21.02 6.98,18.96 8.42,17.52 7.56,15.46 5.52,15.45 5.52,12.55 7.56,12.54 8.42,10.48 6.98,9.04 9.04,6.98 10.48,8.42 12.54,7.56" fill="#fafafa"/><circle cx="14" cy="14" r="3.2" fill="#cdbfab"/></svg>
<div class="a" style="left:130.5px;top:962.8px;height:30px;line-height:30px;font-size:22px;font-weight:normal;color:#6e6e6e;white-space:nowrap;letter-spacing:0.65px;">6 thread_start</div>
<div class="a" style="left:0px;top:995px;width:432px;height:2px;background:#cacaca"></div>
<svg class="a" style="left:11px;top:1018px" width="18" height="16"><path d="M0 0.5 L18 0.5 L9 15.5 Z" fill="#7d7d7d"/></svg>
<div class="a term" style="left:38.5px;top:1015px;width:27px;height:22px"></div>
<div class="a" style="left:75px;top:1011.8px;height:30px;line-height:30px;font-size:22px;font-weight:bold;color:#333333;white-space:nowrap;letter-spacing:0.65px;letter-spacing:1.0px">HelloGrid <span style="color:#6e6e6e">PID 2697</span></div>
<svg class="a" style="left:327px;top:1010px" width="32" height="32"><circle cx="16" cy="16" r="13" fill="none" stroke="#3079f4" stroke-width="3.8"/><circle cx="16" cy="22" r="2.1" fill="none" stroke="#3079f4" stroke-width="1.7"/><path d="M17.3 20.3 L22.3 12" stroke="#3079f4" stroke-width="2" fill="none"/></svg>
<svg class="a" style="left:373px;top:1013px" width="28" height="28"><circle cx="14" cy="14" r="11.9" fill="none" stroke="#7a7a7a" stroke-width="1.9"/><path d="M10 8 L10 21 M14 6 L14 23 M18 8 L18 21" stroke="#7a7a7a" stroke-width="1.8"/></svg>
<svg class="a" style="left:37px;top:1064.5px" width="30" height="30"><rect x="0.6" y="0.6" width="28.5" height="28.5" rx="6" fill="#efefef" stroke="#7a7a7a" stroke-width="1.2"/><rect x="3.6" y="3.6" width="22.5" height="22.5" rx="4.5" fill="#d6d6d6" stroke="#929292" stroke-width="1"/><rect x="7.5" y="7.5" width="14.7" height="14.7" fill="#9c9c9c" stroke="#9c9c9c" stroke-width="1.2" stroke-dasharray="1.2 1"/><rect x="8.8" y="8.8" width="12.1" height="12.1" fill="#9a9a9a"/></svg>
<div class="a" style="left:76px;top:1064.8px;height:30px;line-height:30px;font-size:22px;font-weight:normal;color:#333333;white-space:nowrap;letter-spacing:0.65px;">CPU</div>
<div class="a" style="right:26.799999999999955px;top:1064.8px;height:30px;line-height:30px;font-size:22px;color:#6e6e6e;white-space:nowrap;text-align:right;letter-spacing:0.25px;margin-right:-0.25px">6%</div>
<div class="a" style="left:36px;top:1111px;width:368px;height:2px;background:#dedede"></div><svg class="a" style="left:36px;top:1095px" width="384" height="16"><g fill="#3b95e0"><rect x="0" y="12" width="4" height="4"/><rect x="6" y="10" width="4" height="6"/><rect x="12" y="10" width="4" height="6"/><rect x="18" y="10" width="4" height="6"/><rect x="24" y="8" width="4" height="8"/><rect x="30" y="10" width="4" height="6"/><rect x="36" y="12" width="4" height="4"/><rect x="42" y="12" width="4" height="4"/><rect x="48" y="10" width="4" height="6"/><rect x="54" y="10" width="4" height="6"/><rect x="60" y="12" width="4" height="4"/><rect x="66" y="10" width="4" height="6"/><rect x="72" y="10" width="4" height="6"/><rect x="78" y="8" width="4" height="8"/><rect x="84" y="10" width="4" height="6"/><rect x="90" y="10" width="4" height="6"/><rect x="96" y="10" width="4" height="6"/><rect x="102" y="10" width="4" height="6"/><rect x="108" y="12" width="4" height="4"/><rect x="114" y="10" width="4" height="6"/><rect x="120" y="12" width="4" height="4"/><rect x="126" y="12" width="4" height="4"/><rect x="132" y="12" width="4" height="4"/><rect x="138" y="10" width="4" height="6"/><rect x="144" y="8" width="4" height="8"/><rect x="150" y="10" width="4" height="6"/><rect x="156" y="10" width="4" height="6"/><rect x="162" y="12" width="4" height="4"/><rect x="168" y="12" width="4" height="4"/><rect x="174" y="12" width="4" height="4"/><rect x="180" y="12" width="4" height="4"/><rect x="186" y="12" width="4" height="4"/><rect x="192" y="10" width="4" height="6"/><rect x="198" y="10" width="4" height="6"/><rect x="204" y="10" width="4" height="6"/><rect x="210" y="8" width="4" height="8"/><rect x="216" y="8" width="4" height="8"/><rect x="222" y="10" width="4" height="6"/><rect x="228" y="10" width="4" height="6"/><rect x="234" y="12" width="4" height="4"/><rect x="240" y="10" width="4" height="6"/><rect x="246" y="12" width="4" height="4"/><rect x="252" y="8" width="4" height="8"/><rect x="258" y="10" width="4" height="6"/><rect x="264" y="12" width="4" height="4"/><rect x="270" y="10" width="4" height="6"/><rect x="276" y="8" width="4" height="8"/><rect x="282" y="8" width="4" height="8"/><rect x="288" y="10" width="4" height="6"/><rect x="294" y="12" width="4" height="4"/><rect x="300" y="10" width="4" height="6"/><rect x="306" y="10" width="4" height="6"/><rect x="312" y="10" width="4" height="6"/><rect x="318" y="10" width="4" height="6"/><rect x="324" y="8" width="4" height="8"/><rect x="330" y="8" width="4" height="8"/><rect x="336" y="10" width="4" height="6"/><rect x="342" y="12" width="4" height="4"/><rect x="348" y="8" width="4" height="8"/><rect x="354" y="12" width="4" height="4"/><rect x="360" y="10" width="4" height="6"/><rect x="366" y="10" width="4" height="6"/><rect x="372" y="10" width="4" height="6"/></g></svg>
<svg class="a" style="left:36px;top:1125px" width="31" height="24"><rect x="2.6" y="0.3" width="2.2" height="3.4" rx="0.8" fill="#ddd" stroke="#7a7a7a" stroke-width="0.9"/><rect x="2.6" y="20.2" width="2.2" height="3.4" rx="0.8" fill="#ddd" stroke="#7a7a7a" stroke-width="0.9"/><rect x="6.6" y="0.3" width="2.2" height="3.4" rx="0.8" fill="#ddd" stroke="#7a7a7a" stroke-width="0.9"/><rect x="6.6" y="20.2" width="2.2" height="3.4" rx="0.8" fill="#ddd" stroke="#7a7a7a" stroke-width="0.9"/><rect x="10.6" y="0.3" width="2.2" height="3.4" rx="0.8" fill="#ddd" stroke="#7a7a7a" stroke-width="0.9"/><rect x="10.6" y="20.2" width="2.2" height="3.4" rx="0.8" fill="#ddd" stroke="#7a7a7a" stroke-width="0.9"/><rect x="14.6" y="0.3" width="2.2" height="3.4" rx="0.8" fill="#ddd" stroke="#7a7a7a" stroke-width="0.9"/><rect x="14.6" y="20.2" width="2.2" height="3.4" rx="0.8" fill="#ddd" stroke="#7a7a7a" stroke-width="0.9"/><rect x="18.6" y="0.3" width="2.2" height="3.4" rx="0.8" fill="#ddd" stroke="#7a7a7a" stroke-width="0.9"/><rect x="18.6" y="20.2" width="2.2" height="3.4" rx="0.8" fill="#ddd" stroke="#7a7a7a" stroke-width="0.9"/><rect x="22.6" y="0.3" width="2.2" height="3.4" rx="0.8" fill="#ddd" stroke="#7a7a7a" stroke-width="0.9"/><rect x="22.6" y="20.2" width="2.2" height="3.4" rx="0.8" fill="#ddd" stroke="#7a7a7a" stroke-width="0.9"/><rect x="26.6" y="0.3" width="2.2" height="3.4" rx="0.8" fill="#ddd" stroke="#7a7a7a" stroke-width="0.9"/><rect x="26.6" y="20.2" width="2.2" height="3.4" rx="0.8" fill="#ddd" stroke="#7a7a7a" stroke-width="0.9"/><rect x="0.6" y="3.3" width="29.6" height="17" fill="#cfcfcf" stroke="#777" stroke-width="1.2"/></svg>
<div class="a" style="left:76px;top:1122.8px;height:30px;line-height:30px;font-size:22px;font-weight:normal;color:#333333;white-space:nowrap;letter-spacing:0.65px;">Memory</div>
<div class="a" style="right:26.799999999999955px;top:1122.8px;height:30px;line-height:30px;font-size:22px;color:#6e6e6e;white-space:nowrap;text-align:right;letter-spacing:0.25px;margin-right:-0.25px">2.8 MB</div>
<div class="a" style="left:36px;top:1169px;width:368px;height:2px;background:#dedede"></div><svg class="a" style="left:36px;top:1153px" width="384" height="16"><g fill="#3b95e0"><rect x="0" y="4" width="4" height="12"/><rect x="6" y="4" width="4" height="12"/><rect x="12" y="4" width="4" height="12"/><rect x="18" y="4" width="4" height="12"/><rect x="24" y="4" width="4" height="12"/><rect x="30" y="4" width="4" height="12"/><rect x="36" y="4" width="4" height="12"/><rect x="42" y="4" width="4" height="12"/><rect x="48" y="4" width="4" height="12"/><rect x="54" y="4" width="4" height="12"/><rect x="60" y="4" width="4" height="12"/><rect x="66" y="4" width="4" height="12"/><rect x="72" y="4" width="4" height="12"/><rect x="78" y="4" width="4" height="12"/><rect x="84" y="4" width="4" height="12"/><rect x="90" y="4" width="4" height="12"/><rect x="96" y="4" width="4" height="12"/><rect x="102" y="4" width="4" height="12"/><rect x="108" y="4" width="4" height="12"/><rect x="114" y="4" width="4" height="12"/><rect x="120" y="4" width="4" height="12"/><rect x="126" y="4" width="4" height="12"/><rect x="132" y="4" width="4" height="12"/><rect x="138" y="4" width="4" height="12"/><rect x="144" y="4" width="4" height="12"/><rect x="150" y="4" width="4" height="12"/><rect x="156" y="4" width="4" height="12"/><rect x="162" y="4" width="4" height="12"/><rect x="168" y="4" width="4" height="12"/><rect x="174" y="4" width="4" height="12"/><rect x="180" y="4" width="4" height="12"/><rect x="186" y="4" width="4" height="12"/><rect x="192" y="4" width="4" height="12"/><rect x="198" y="4" width="4" height="12"/><rect x="204" y="4" width="4" height="12"/><rect x="210" y="4" width="4" height="12"/><rect x="216" y="4" width="4" height="12"/><rect x="222" y="4" width="4" height="12"/><rect x="228" y="4" width="4" height="12"/><rect x="234" y="4" width="4" height="12"/><rect x="240" y="4" width="4" height="12"/><rect x="246" y="4" width="4" height="12"/><rect x="252" y="4" width="4" height="12"/><rect x="258" y="4" width="4" height="12"/><rect x="264" y="4" width="4" height="12"/><rect x="270" y="4" width="4" height="12"/><rect x="276" y="4" width="4" height="12"/><rect x="282" y="4" width="4" height="12"/><rect x="288" y="4" width="4" height="12"/><rect x="294" y="4" width="4" height="12"/><rect x="300" y="4" width="4" height="12"/><rect x="306" y="4" width="4" height="12"/><rect x="312" y="4" width="4" height="12"/><rect x="318" y="4" width="4" height="12"/><rect x="324" y="4" width="4" height="12"/><rect x="330" y="4" width="4" height="12"/><rect x="336" y="4" width="4" height="12"/><rect x="342" y="4" width="4" height="12"/><rect x="348" y="4" width="4" height="12"/><rect x="354" y="4" width="4" height="12"/><rect x="360" y="4" width="4" height="12"/><rect x="366" y="4" width="4" height="12"/><rect x="372" y="4" width="4" height="12"/></g></svg>
<svg class="a" style="left:37px;top:1187.5px" width="31" height="16"><rect x="0.6" y="0.6" width="26.8" height="13" rx="1.3" fill="#dedede" stroke="#777" stroke-width="1.2"/><path d="M27.4 4.3 L29.2 4.3 Q30.3 4.3 30.3 5.7 L30.3 8.5 Q30.3 9.9 29.2 9.9 L27.4 9.9" fill="#dedede" stroke="#777" stroke-width="1.1"/><path d="M3 1.4 L3 12.8" stroke="#999" stroke-width="0.8"/></svg>
<div class="a" style="left:76px;top:1180.8px;height:30px;line-height:30px;font-size:22px;font-weight:normal;color:#333333;white-space:nowrap;letter-spacing:0.65px;">Energy Impact</div>
<div class="a" style="right:26.799999999999955px;top:1180.8px;height:30px;line-height:30px;font-size:22px;color:#6e6e6e;white-space:nowrap;text-align:right;letter-spacing:0.25px;margin-right:-0.25px">Very High</div>
<div class="a" style="left:36px;top:1227px;width:368px;height:2px;background:#dedede"></div><svg class="a" style="left:36px;top:1211px" width="384" height="16"><g fill="#3b95e0"><rect x="0" y="4" width="4" height="12"/><rect x="6" y="6" width="4" height="10"/><rect x="12" y="6" width="4" height="10"/><rect x="18" y="6" width="4" height="10"/><rect x="24" y="6" width="4" height="10"/><rect x="30" y="6" width="4" height="10"/><rect x="36" y="6" width="4" height="10"/><rect x="42" y="6" width="4" height="10"/><rect x="48" y="6" width="4" height="10"/><rect x="54" y="6" width="4" height="10"/><rect x="60" y="6" width="4" height="10"/><rect x="66" y="12" width="4" height="4"/><rect x="72" y="6" width="4" height="10"/><rect x="78" y="6" width="4" height="10"/><rect x="84" y="6" width="4" height="10"/><rect x="90" y="6" width="4" height="10"/><rect x="96" y="6" width="4" height="10"/><rect x="102" y="8" width="4" height="8"/><rect x="108" y="8" width="4" height="8"/><rect x="114" y="8" width="4" height="8"/><rect x="120" y="8" width="4" height="8"/><rect x="126" y="6" width="4" height="10"/><rect x="132" y="6" width="4" height="10"/><rect x="138" y="6" width="4" height="10"/><rect x="144" y="6" width="4" height="10"/><rect x="150" y="6" width="4" height="10"/><rect x="156" y="6" width="4" height="10"/><rect x="162" y="8" width="4" height="8"/><rect x="168" y="6" width="4" height="10"/><rect x="174" y="8" width="4" height="8"/><rect x="180" y="6" width="4" height="10"/><rect x="186" y="6" width="4" height="10"/><rect x="192" y="6" width="4" height="10"/><rect x="198" y="6" width="4" height="10"/><rect x="204" y="6" width="4" height="10"/><rect x="210" y="6" width="4" height="10"/><rect x="216" y="6" width="4" height="10"/><rect x="222" y="6" width="4" height="10"/><rect x="228" y="6" width="4" height="10"/><rect x="234" y="6" width="4" height="10"/><rect x="240" y="8" width="4" height="8"/><rect x="246" y="6" width="4" height="10"/><rect x="252" y="6" width="4" height="10"/><rect x="258" y="6" width="4" height="10"/><rect x="264" y="6" width="4" height="10"/><rect x="270" y="6" width="4" height="10"/><rect x="276" y="6" width="4" height="10"/><rect x="282" y="6" width="4" height="10"/><rect x="288" y="6" width="4" height="10"/><rect x="294" y="6" width="4" height="10"/><rect x="300" y="6" width="4" height="10"/><rect x="306" y="6" width="4" height="10"/><rect x="312" y="6" width="4" height="10"/><rect x="318" y="6" width="4" height="10"/><rect x="324" y="6" width="4" height="10"/><rect x="330" y="6" width="4" height="10"/><rect x="336" y="6" width="4" height="10"/><rect x="342" y="6" width="4" height="10"/><rect x="348" y="6" width="4" height="10"/><rect x="354" y="6" width="4" height="10"/><rect x="360" y="6" width="4" height="10"/><rect x="366" y="6" width="4" height="10"/><rect x="372" y="6" width="4" height="10"/></g></svg>
<svg class="a" style="left:37px;top:1238px" width="30" height="31"><path d="M3.5 1 L25 1 Q26.5 1 26.8 2.5 L28.3 24 L1.2 24 L2.7 2.5 Q3 1 3.5 1 Z" fill="#e4e4e4" stroke="#7a7a7a" stroke-width="1.1"/><rect x="1" y="23.3" width="27.6" height="5.8" rx="1.5" fill="#d0d0d0" stroke="#7a7a7a" stroke-width="1.1"/><rect x="6" y="3" width="11.5" height="1.6" fill="#777"/><ellipse cx="14" cy="14" rx="9" ry="6.3" fill="#dadada" stroke="#999" stroke-width="0.9"/><ellipse cx="14" cy="14" rx="3.5" ry="2" fill="#eee" stroke="#888" stroke-width="0.9"/><path d="M4.5 24.3 L4.5 28.3 M14 24.3 L14 28.3 M16 24.3 L16 28.3 M18 24.3 L18 28.3 M20 24.3 L20 28.3" stroke="#888" stroke-width="0.8"/></svg>
<div class="a" style="left:76px;top:1238.8px;height:30px;line-height:30px;font-size:22px;font-weight:normal;color:#333333;white-space:nowrap;letter-spacing:0.65px;">Disk</div>
<div class="a" style="right:26.799999999999955px;top:1238.8px;height:30px;line-height:30px;font-size:22px;color:#6e6e6e;white-space:nowrap;text-align:right;letter-spacing:0.25px;margin-right:-0.25px">Zero KB/s</div>
<div class="a" style="left:36px;top:1285px;width:368px;height:2px;background:#dedede"></div>
<svg class="a" style="left:38px;top:1297px" width="29" height="29"><defs><linearGradient id="gnet" x1="0" y1="0" x2="0" y2="1"><stop offset="0" stop-color="#a5a5a5"/><stop offset="1" stop-color="#7b7b7b"/></linearGradient></defs><circle cx="14.2" cy="14.2" r="13.6" fill="url(#gnet)" stroke="#777" stroke-width="0.8"/><g stroke="#f2f2f2" stroke-width="0.8" fill="none"><path d="M7 10 Q12 8 16 9 Q21 12 24 16 M9 16 L14 17 L24 16 M7 10 L9 16 L12 22 M16 9 L14 17 L12 22 M3 13 Q8 4 20 2 M5 22 Q9 14 14 17"/></g><g fill="#fff"><circle cx="7" cy="10" r="1.4"/><circle cx="16" cy="9" r="1.4"/><circle cx="9" cy="16" r="1.2"/><circle cx="14" cy="17" r="1.4"/><circle cx="24" cy="16" r="1.4"/><circle cx="12" cy="22" r="1.2"/></g></svg>
<div class="a" style="left:76px;top:1296.8px;height:30px;line-height:30px;font-size:22px;font-weight:normal;color:#333333;white-space:nowrap;letter-spacing:0.65px;">Network</div>
<div class="a" style="right:26.799999999999955px;top:1296.8px;height:30px;line-height:30px;font-size:22px;color:#6e6e6e;white-space:nowrap;text-align:right;letter-spacing:0.25px;margin-right:-0.25px">Zero KB/s</div>
<div class="a" style="left:36px;top:1343px;width:368px;height:2px;background:#dedede"></div>
<div class="a" style="left:10.5px;top:1459.5px;width:410.5px;height:43px;border-radius:7px;background:#fff;border:1.5px solid #dadada"></div>
<svg class="a" style="left:19px;top:1467px" width="28" height="28"><circle cx="14" cy="14" r="12" fill="none" stroke="#7a7a7a" stroke-width="1.8"/><path d="M8 10.5 L20 10.5 M10 14.5 L18 14.5 M12 18.5 L16 18.5" stroke="#7a7a7a" stroke-width="1.8"/></svg>
<div class="a" style="left:58.5px;top:1466.8px;height:30px;line-height:30px;font-size:22px;font-weight:normal;color:#bdbdbd;white-space:nowrap;letter-spacing:0.65px;">Filter</div>
<svg class="a" style="left:315px;top:1467px" width="28" height="28"><g fill="#2f7bf5"><rect x="1" y="2" width="26" height="3.3"/><rect x="1" y="23" width="26" height="3.3"/></g><rect x="8.5" y="9" width="11" height="10" fill="none" stroke="#2f7bf5" stroke-width="3.2"/></svg>
<svg class="a" style="left:349px;top:1467px" width="28" height="28"><rect x="1" y="1.5" width="26" height="25" fill="none" stroke="#777" stroke-width="1.8"/><rect x="6" y="6" width="16" height="4.5" fill="none" stroke="#777" stroke-width="1.5"/><path d="M8 10.5 L8 17 M20 10.5 L20 17" stroke="#777" stroke-width="1.5"/><rect x="6" y="17" width="4" height="4" fill="none" stroke="#777" stroke-width="1.3"/><rect x="18" y="17" width="4" height="4" fill="none" stroke="#777" stroke-width="1.3"/></svg>
<svg class="a" style="left:382px;top:1466px" width="31" height="31"><rect x="0" y="0" width="30" height="30" fill="#2f7bf5"/><g fill="none" stroke="#fff" stroke-width="1.8"><rect x="10.5" y="6" width="9" height="8"/><rect x="6" y="14" width="9" height="9"/><rect x="15" y="14" width="9" height="9"/></g></svg></div>
  <div id="ed">
<div class="a" style="left:0;top:337px;width:1486px;height:34px;background:#e5ecef"></div>
<svg class="a" style="left:0;top:337px" width="95" height="34"><path d="M0 0 L84 0 L94 17 L84 34 L0 34 Z" fill="#3b7ef0"/></svg>
<div class="a lnum" style="left:0;top:-2.2px;width:75px;color:#a5a5a5">23</div>
<div class="a mono" style="left:102.5px;top:-1.5px;color:#000"><span style="color:#5d6c79"> See the full license in the file "LICENSE" in the top level distribution directory</span></div>
<div class="a lnum" style="left:0;top:31.8px;width:75px;color:#a5a5a5">24</div>
<div class="a mono" style="left:102.5px;top:32.5px;color:#000"><span style="color:#5d6c79"> <span class="ast">*************************************************************************************</span>/</span></div>
<div class="a lnum" style="left:0;top:65.8px;width:75px;color:#a5a5a5">25</div>
<div class="a mono" style="left:102.5px;top:66.5px;color:#000"><span style="color:#5d6c79;font-style:italic">/<span class="ast">*</span>  END LEGAL <span class="ast">*</span>/</span></div>
<div class="a lnum" style="left:0;top:99.8px;width:75px;color:#a5a5a5">26</div>
<div class="a mono" style="left:102.5px;top:100.5px;color:#000"></div>
<div class="a lnum" style="left:0;top:133.8px;width:75px;color:#a5a5a5">27</div>
<div class="a mono" style="left:102.5px;top:134.5px;color:#000"><span style="color:#643820">#include </span><span style="color:#c41a16">&lt;Grid/Grid.h&gt;</span></div>
<div class="a lnum" style="left:0;top:167.8px;width:75px;color:#a5a5a5">28</div>
<div class="a mono" style="left:102.5px;top:168.5px;color:#000"><span style="color:#9b2393;-webkit-text-stroke:0.45px currentColor">using</span> <span style="color:#9b2393;-webkit-text-stroke:0.45px currentColor">namespace</span> <span style="color:#326d74">Grid</span>;</div>
<div class="a lnum" style="left:0;top:201.8px;width:75px;color:#a5a5a5">29</div>
<div class="a mono" style="left:102.5px;top:202.5px;color:#000"></div>
<div class="a lnum" style="left:0;top:235.8px;width:75px;color:#a5a5a5">30</div>
<div class="a mono" style="left:102.5px;top:236.5px;color:#000"><span style="color:#9b2393;-webkit-text-stroke:0.45px currentColor">int</span> main(<span style="color:#9b2393;-webkit-text-stroke:0.45px currentColor">int</span> argc, <span style="color:#9b2393;-webkit-text-stroke:0.45px currentColor">char</span> <span class="ast">*</span> argv[]) {</div>
<div class="a lnum" style="left:0;top:269.8px;width:75px;color:#a5a5a5">31</div>
<div class="a mono" style="left:102.5px;top:270.5px;color:#000">  <span style="color:#326d74">Grid_init</span>(&amp;argc,&amp;argv);</div>
<div class="a lnum" style="left:0;top:303.8px;width:75px;color:#a5a5a5">32</div>
<div class="a mono" style="left:102.5px;top:304.5px;color:#000">  <span style="color:#6c36a9">std</span>::<span style="color:#6c36a9">cout</span> &lt;&lt; <span style="color:#326d74">GridLogMessage</span> &lt;&lt; <span style="color:#c41a16">"Hello Grid"</span> &lt;&lt; <span style="color:#6c36a9">std</span>::<span style="color:#3900a0">endl</span>;</div>
<div class="a lnum" style="left:0;top:337.8px;width:75px;color:#fff;font-weight:bold">33</div>
<div class="a mono" style="left:102.5px;top:338.5px;color:#000">  <span style="color:#326d74">Grid_finalize</span>();</div>
<div class="a lnum" style="left:0;top:371.8px;width:75px;color:#a5a5a5">34</div>
<div class="a mono" style="left:102.5px;top:372.5px;color:#000">  <span style="color:#9b2393;-webkit-text-stroke:0.45px currentColor">return</span> <span style="color:#1c00cf">0</span>;</div>
<div class="a lnum" style="left:0;top:405.8px;width:75px;color:#a5a5a5">35</div>
<div class="a mono" style="left:102.5px;top:406.5px;color:#000">}</div>
<div class="a lnum" style="left:0;top:439.8px;width:75px;color:#a5a5a5">36</div>
<div class="a mono" style="left:102.5px;top:440.5px;color:#000"></div>
<div class="a" style="left:1114px;top:337px;width:400px;height:34px;background:#bddbb0;border-radius:5px 0 0 5px"></div>
<div class="a" style="left:1117px;top:340.5px;width:36px;height:27px;background:#ddecd6;border:1.5px solid #a9cf98;border-radius:4px"></div>
<svg class="a" style="left:1117px;top:340.5px" width="36" height="27"><path d="M9.5 9 L26.5 9 M9.5 13.5 L26.5 13.5 M9.5 18 L26.5 18" stroke="#7b8a74" stroke-width="1.6"/></svg>
<div class="a" style="left:1165px;top:337px;height:34px;line-height:34px;font-size:24.5px;color:#000;white-space:nowrap">Thread 1: breakpoint 1.1</div>
</div>
  <div id="dbg">
<svg class="a" style="left:0;top:0" width="520" height="56"><g fill="none" stroke="#4d4d4d" stroke-width="1.6"><rect x="17.899999999999977" y="16.700000000000045" width="28.3" height="22.6"/><path d="M24.5 24.799999999999955 L39.60000000000002 24.799999999999955 L32 32.200000000000045 Z"/><rect x="146.10000000000002" y="17.899999999999977" width="5.8" height="20"/><path d="M158 18.299999999999955 L173.5 27.899999999999977 L158 37.5 Z"/><path d="M210.5 32.5 L224 19 L236.5 31.5 M230.5 31.799999999999955 L236.79999999999995 31.799999999999955 L236.79999999999995 25.5"/><rect x="216" y="36.200000000000045" width="16" height="3.6"/><path d="M287.9 14.799999999999955 L287.9 32.299999999999955 M281.29999999999995 25.799999999999955 L287.9 32.299999999999955 L294.6 25.799999999999955"/><rect x="280" y="36.200000000000045" width="16" height="3.6"/><path d="M351 15.5 L351 32.799999999999955 M344.29999999999995 22.399999999999977 L351 15.600000000000023 L357.70000000000005 22.399999999999977"/><rect x="343.1" y="36.200000000000045" width="16" height="3.6"/><rect x="410.5" y="16.200000000000045" width="11.5" height="23.6"/><path d="M410.5 20.299999999999955 L404.20000000000005 20.299999999999955 L404.20000000000005 35.60000000000002 L410.5 35.60000000000002 M422 20.299999999999955 L428 20.299999999999955 L428 35.60000000000002 L422 35.60000000000002"/><circle cx="469.79999999999995" cy="18.700000000000045" r="5"/><circle cx="469.79999999999995" cy="37" r="5"/><circle cx="487" cy="27.899999999999977" r="6.2"/><path d="M474.29999999999995 21 L481.29999999999995 24.799999999999955 M474.29999999999995 34.700000000000045 L481.29999999999995 31"/></g><path d="M81 19 L102 19 L110.79999999999995 27.799999999999955 L102 36.700000000000045 L81 36.700000000000045 Z" fill="#3a7ef0"/><rect x="382.20000000000005" y="11" width="1.6" height="34" fill="#c0c0c0"/><rect x="510.20000000000005" y="11" width="1.6" height="34" fill="#c0c0c0"/></svg>
<div class="a term" style="left:528.5px;top:17.5px;width:26.5px;height:21.5px"></div>
<div class="a" style="left:565.5px;top:13px;height:30px;line-height:30px;font-size:22px;color:#262626;white-space:nowrap;letter-spacing:1.15px">HelloGrid - 2696</div>
<svg class="a" style="left:752px;top:14px" width="12" height="28"><path d="M1.5 0.5 L10 14 L1.5 27.5" fill="none" stroke="#7d7d7d" stroke-width="1.6"/></svg>
<svg class="a" style="left:769.5px;top:12.5px" width="32" height="32"><circle cx="16" cy="16" r="14.1" fill="#95aedb" stroke="#5d87cb" stroke-width="1.6"/><g fill="#fff" stroke="#6b8fcf" stroke-width="0.6"><rect x="10.8" y="7" width="2.4" height="18"/><rect x="14.8" y="4.8" width="2.4" height="22"/><rect x="18.8" y="7" width="2.4" height="18"/></g></svg>
<div class="a" style="left:811px;top:13px;height:30px;line-height:30px;font-size:22px;color:#262626;white-space:nowrap;letter-spacing:0.65px">Thread 1</div>
<svg class="a" style="left:911px;top:14px" width="12" height="28"><path d="M1.5 0.5 L10 14 L1.5 27.5" fill="none" stroke="#7d7d7d" stroke-width="1.6"/></svg>
<svg class="a" style="left:932px;top:14px" width="28" height="28"><rect x="0" y="0" width="28" height="28" fill="#9e8461"/><rect x="2" y="2" width="24" height="24" fill="#b9a586"/><rect x="3.5" y="3.5" width="21" height="21" fill="#9e8461"/><path d="M3.2 7.8 L14 3.8 L24.8 7.8 Z" fill="#fff"/><rect x="6" y="10.3" width="5" height="7.5" fill="#fff"/><rect x="11.8" y="10.3" width="4.4" height="7.5" fill="#fff"/><rect x="17" y="10.3" width="5" height="7.5" fill="#fff"/><rect x="6" y="20" width="16" height="2" fill="#fff"/></svg>
<div class="a" style="left:970px;top:13px;height:30px;line-height:30px;font-size:22px;color:#262626;white-space:nowrap;letter-spacing:0.5px">0 main</div>
</div>
  <div id="vars">
<div class="a" style="left:42px;top:4px;width:28px;height:28px;border-radius:5px;background:#c994e0;border:1.5px solid #bd6fdc;color:#fff;font-size:21px;line-height:25px;text-align:center;-webkit-text-stroke:0.6px #fff">A</div>
<div class="a" style="left:79px;top:4px;height:30px;line-height:30px;font-size:22px;color:#262626;white-space:nowrap;letter-spacing:0.55px"><b>argc</b> = <span style="font-size:21px">(int)</span> 3</div>
<svg class="a" style="left:17px;top:44.5px" width="15" height="18"><path d="M0.5 0.5 L14.5 9 L0.5 17.5 Z" fill="#7f7f7f"/></svg>
<div class="a" style="left:42px;top:40px;width:28px;height:28px;border-radius:5px;background:#c994e0;border:1.5px solid #bd6fdc;color:#fff;font-size:21px;line-height:25px;text-align:center;-webkit-text-stroke:0.6px #fff">A</div>
<div class="a" style="left:79px;top:40px;height:30px;line-height:30px;font-size:22px;color:#262626;white-space:nowrap;letter-spacing:0.55px"><b>argv</b> = <span style="font-size:21px">(char **)</span> <span style="letter-spacing:1.5px">0x7ffee9039c28</span></div>
<svg class="a" style="left:17px;top:80.5px" width="15" height="18"><path d="M0.5 0.5 L14.5 9 L0.5 17.5 Z" fill="#7f7f7f"/></svg>
<div class="a" style="left:42px;top:76px;width:28px;height:28px;border-radius:5px;background:#93d074;border:1.5px solid #6dc04a;color:#fff;font-size:21px;line-height:25px;text-align:center;-webkit-text-stroke:0.6px #fff">V</div>
<div class="a" style="left:79px;top:76px;height:30px;line-height:30px;font-size:22px;color:#262626;white-space:nowrap;letter-spacing:0.55px"><b>Grid::GridLogMessage</b> <span style="font-size:21px">(Grid::GridLogger)</span></div>
<div class="a" style="left:772px;top:0px;width:2px;height:690px;background:#c2c2c2"></div>
<div class="a" style="left:780px;top:0px;height:34px;line-height:34px;font-family:'Liberation Mono',monospace;font-weight:bold;font-size:24.5px;color:#6b8ff3;white-space:pre;-webkit-text-stroke:0.3px currentColor">(lldb)</div>
<div class="a" style="left:21px;top:647px;height:30px;line-height:30px;font-size:22px;color:#262626;white-space:nowrap;letter-spacing:0.85px">Auto</div>
<svg class="a" style="left:77px;top:652px" width="14" height="22"><path d="M1.5 8 L7 2 L12.5 8 M1.5 14 L7 20 L12.5 14" fill="none" stroke="#333" stroke-width="2"/></svg>
<div class="a" style="left:104.29999999999995px;top:648px;width:1.6px;height:26px;background:#b8b8b8"></div>
<svg class="a" style="left:117px;top:648px" width="32" height="26"><path d="M1.5 13 Q16 -3 30.5 13 Q16 29 1.5 13 Z" fill="none" stroke="#bdbdbd" stroke-width="1.5"/><circle cx="16" cy="13" r="4" fill="none" stroke="#bdbdbd" stroke-width="1.5"/></svg>
<svg class="a" style="left:161px;top:647px" width="28" height="28"><circle cx="14" cy="14" r="12.3" fill="none" stroke="#bdbdbd" stroke-width="1.5"/><path d="M14 11.5 L14 21" stroke="#bdbdbd" stroke-width="1.6"/><circle cx="14" cy="7.8" r="1" fill="#bdbdbd"/></svg>
<div class="a" style="left:416px;top:640.5px;width:345px;height:43px;border-radius:7px;background:#f0f0f0;border:1.5px solid #d3d3d3"></div><svg class="a" style="left:424.5px;top:648px" width="28" height="28"><circle cx="14" cy="14" r="12" fill="none" stroke="#7a7a7a" stroke-width="1.8"/><path d="M8 10.5 L20 10.5 M10 14.5 L18 14.5 M12 18.5 L16 18.5" stroke="#7a7a7a" stroke-width="1.8"/></svg><div class="a" style="left:460px;top:647px;height:30px;line-height:30px;font-size:22px;color:#bdbdbd;white-space:nowrap;letter-spacing:0.3px">Filter</div>
<div class="a" style="left:795px;top:647px;height:30px;line-height:30px;font-size:22px;color:#262626;white-space:nowrap;letter-spacing:0.6px">All Output</div>
<svg class="a" style="left:906px;top:652px" width="14" height="22"><path d="M1.5 8 L7 2 L12.5 8 M1.5 14 L7 20 L12.5 14" fill="none" stroke="#333" stroke-width="2"/></svg>
<div class="a" style="left:1008.5px;top:640.5px;width:314.5px;height:43px;border-radius:7px;background:#f0f0f0;border:1.5px solid #d3d3d3"></div><svg class="a" style="left:1017.0px;top:648px" width="28" height="28"><circle cx="14" cy="14" r="12" fill="none" stroke="#7a7a7a" stroke-width="1.8"/><path d="M8 10.5 L20 10.5 M10 14.5 L18 14.5 M12 18.5 L16 18.5" stroke="#7a7a7a" stroke-width="1.8"/></svg><div class="a" style="left:1052.5px;top:647px;height:30px;line-height:30px;font-size:22px;color:#bdbdbd;white-space:nowrap;letter-spacing:0.3px">Filter</div>
<svg class="a" style="left:1354px;top:644px" width="30" height="34"><g fill="none" stroke="#777" stroke-width="1.6"><path d="M2 7 L28 7"/><path d="M10.8 6.5 L10.8 2.8 L19.2 2.8 L19.2 6.5"/><path d="M4.5 7.5 L6.3 31 L23.7 31 L25.5 7.5"/><path d="M10.9 10.5 L10.9 27.5 M14.9 10.5 L14.9 27.5 M18.9 10.5 L18.9 27.5" stroke-width="1.8"/></g></svg>
<div class="a" style="left:1396.2px;top:648px;width:1.6px;height:26px;background:#bbb"></div>
<svg class="a" style="left:1408px;top:646px" width="31" height="31"><rect x="2" y="2" width="26" height="26" fill="none" stroke="#3079f0" stroke-width="3.9"/><rect x="6" y="6" width="4" height="18" fill="#3079f0"/></svg>
<svg class="a" style="left:1444px;top:646px" width="31" height="31"><rect x="2" y="2" width="26" height="26" fill="none" stroke="#3079f0" stroke-width="3.9"/><rect x="20" y="6" width="4" height="18" fill="#3079f0"/></svg>
</div>
</div>
</body></html>
